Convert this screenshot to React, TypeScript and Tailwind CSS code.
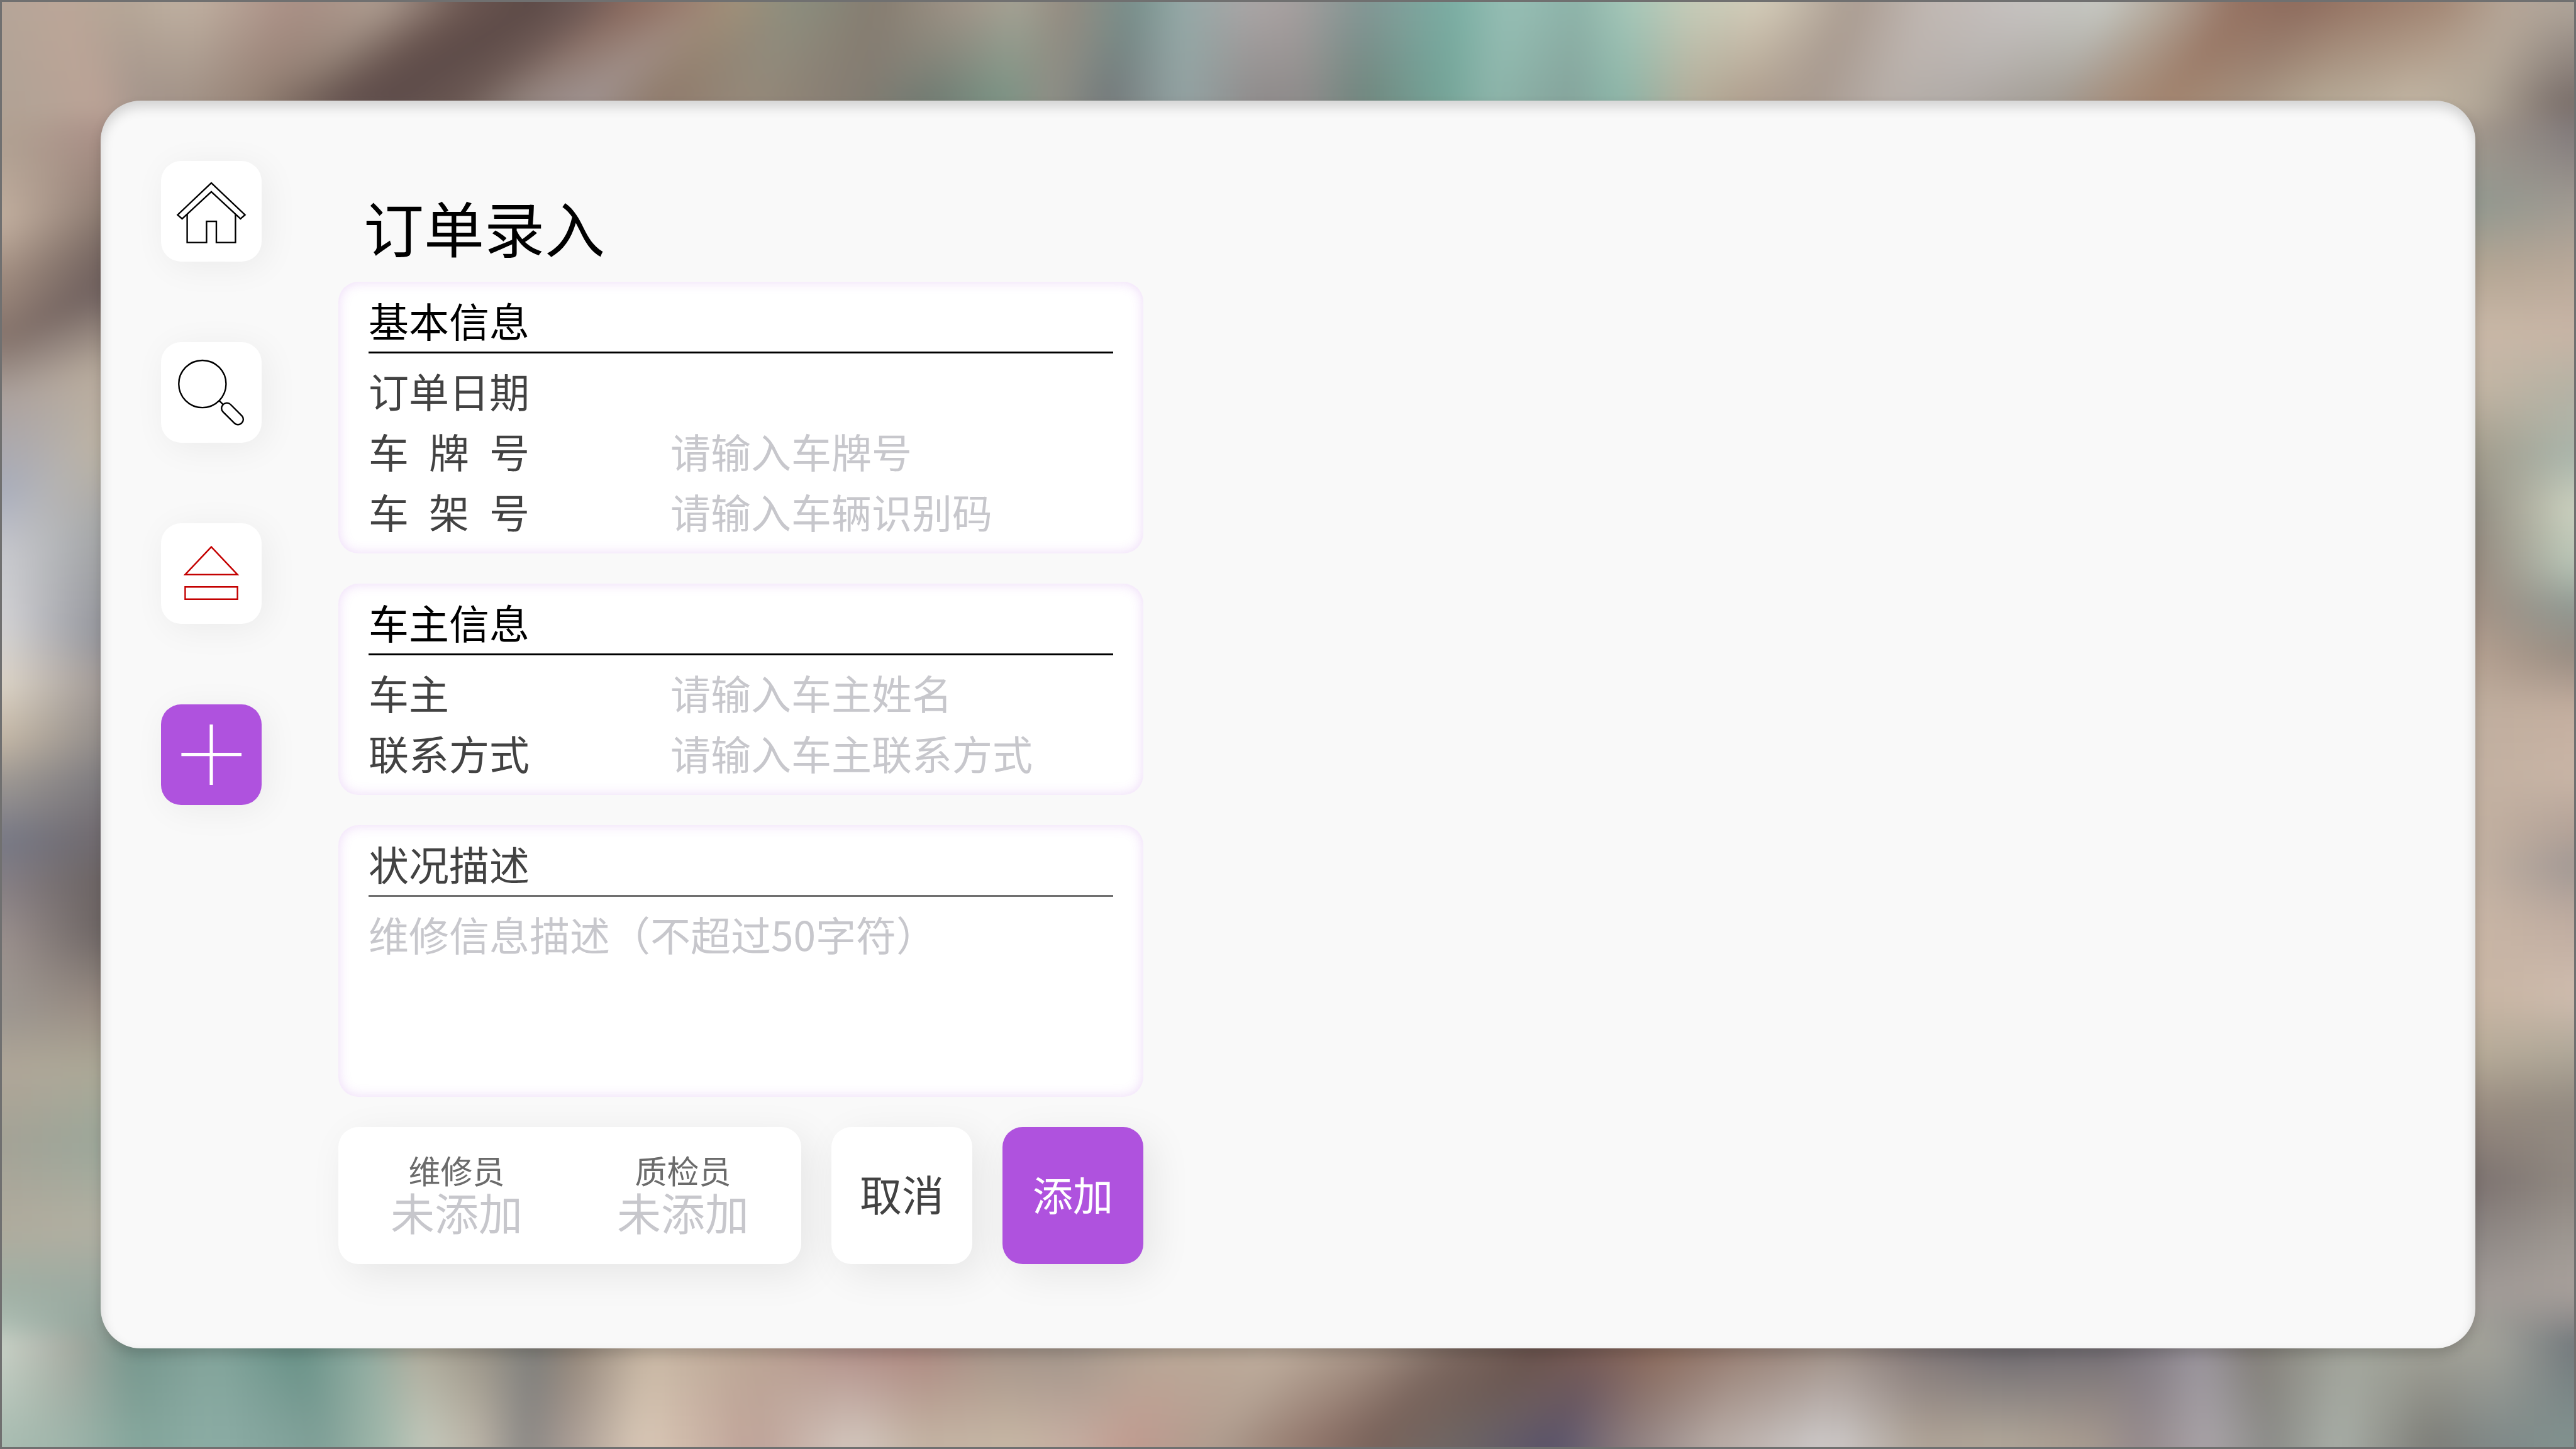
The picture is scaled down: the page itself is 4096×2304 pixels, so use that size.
import React from "react";

type Stop = [number, number, string, string];

const TOP: Stop[] = [
  [0, 0, "b5a598", "b0a295"], [35, 60, "bba698", "bba396"], [75, 85, "b6a797", "a5958c"],
  [115, 115, "c0b1a2", "a29287"], [180, 150, "a98e84", "978477"], [235, 175, "ad9c90", "7f6c62"],
  [290, 205, "6b5650", "665450"], [330, 232, "5d4a47", "5e4c4a"], [360, 275, "6e5955", "685651"],
  [388, 320, "8b6a5e", "948681"], [425, 355, "9c8070", "9f9290"], [450, 400, "a0907a", "8f7a6b"],
  [490, 455, "8a8d7e", "96897a"], [535, 520, "857c70", "847c72"], [590, 565, "a2978a", "6f7b72"],
  [620, 610, "a5a294", "7a9384"], [650, 640, "948b80", "8e8f86"], [690, 675, "78908c", "73797a"],
  [720, 720, "94a9a7", "93a3a3"], [760, 765, "aaa6a6", "8f8b8b"], [785, 795, "a8a0a0", "8d8b8a"],
  [830, 830, "839694", "70867e"], [885, 880, "7aaea3", "74a498"], [920, 910, "97bfb5", "8db5aa"],
  [960, 955, "8db3a9", "85a39b"], [990, 985, "a3c6b8", "8ab5a8"], [1030, 1030, "c5ccb9", "b3ad9a"],
  [1075, 1060, "d4ccb9", "b0a08f"], [1130, 1105, "aa9c91", "a89a90"], [1175, 1150, "c0b7b2", "b7afa9"],
  [1230, 1190, "c6c2c0", "b0aaa6"], [1285, 1250, "c6c8c2", "a39c94"], [1320, 1290, "b3a89b", "a58c7a"],
  [1365, 1320, "957262", "a2846f"], [1400, 1370, "8d6a5c", "a59280"], [1440, 1410, "987766", "b3a693"],
  [1490, 1470, "a38775", "c1b5a3"], [1530, 1510, "b5a597", "b3a898"], [1568, 1560, "b0a69b", "7a6f6b"],
];

const BOTTOM: Stop[] = [
  [0, 0, "c9d1c6", "a8bcb1"], [45, 40, "a4a89f", "9fb6ab"], [80, 85, "75958c", "84a69c"],
  [130, 130, "85a69d", "8cada5"], [180, 195, "669086", "7f9f97"], [220, 235, "8eaba0", "a3b9ac"],
  [255, 260, "b0ac9c", "c3c8bb"], [290, 290, "9c9689", "bdb5a8"], [325, 320, "7e7e7b", "8c8986"],
  [350, 345, "938679", "a69a93"], [395, 390, "c9b8a5", "dac9b7"], [450, 460, "bda897", "bea197"],
  [520, 520, "b08d86", "d4c9c0"], [560, 560, "ad8880", "c4b4a4"], [600, 620, "a69388", "c7b7a5"],
  [650, 655, "a2958a", "c6ada1"], [710, 685, "b8a897", "c19b90"], [780, 740, "beac9c", "ae9c8e"],
  [840, 790, "a49184", "93786d"], [890, 830, "7b6860", "7b645b"], [940, 880, "69514b", "6f6765"],
  [975, 945, "7d5e55", "58526b"], [1010, 990, "8d6b5c", "8b7c7e"], [1060, 1040, "987f73", "b6aaa4"],
  [1120, 1115, "9f8f86", "cfcccc"], [1170, 1170, "807576", "b0a497"], [1220, 1220, "6c686e", "b3a99b"],
  [1285, 1270, "726d74", "a99c90"], [1310, 1305, "827c84", "958a8c"], [1340, 1345, "9a949c", "a9a4a8"],
  [1375, 1385, "837e78", "8b8c88"], [1430, 1425, "a3a69c", "a9afa8"], [1480, 1480, "a0a096", "7c7c76"],
  [1520, 1520, "a3a29a", "7e8887"], [1568, 1568, "72797c", "829390"],
];

const LEFT: Stop[] = [
  [0, 0, "bcaa9b", "baa79a"], [56, 56, "b2a394", "bba498"], [90, 84, "b0a092", "a98f86"],
  [135, 125, "c3b0a0", "8f7d73"], [169, 155, "a18d80", "766661"], [208, 176, "85736b", "6e5f5d"],
  [242, 225, "aca19c", "b9ac9d"], [303, 270, "a9afbf", "bdb3a3"], [338, 320, "c8c9ce", "a5a7a8"],
  [377, 388, "d3d3d6", "93949b"], [416, 416, "ddd5c8", "a29a96"], [450, 450, "c5b8a6", "928d8a"],
  [475, 475, "a09a94", "7f7c80"], [512, 512, "777986", "6f696e"], [540, 540, "878085", "6b6362"],
  [574, 570, "9c918e", "6d6564"], [619, 615, "9d9891", "9a8d83"], [652, 652, "b0a698", "aca997"],
  [697, 697, "a3a296", "9ba79a"], [748, 748, "b0ab9d", "b2b0a2"], [787, 787, "a0b0a5", "9ba9a0"],
  [816, 816, "b4c4b9", "8da097"], [849, 849, "d1d8ce", "8fa39a"], [882, 882, "a5bdb1", "90aaa2"],
];

const RIGHT: Stop[] = [
  [0, 0, "a89686", "b0a8a0"], [28, 28, "b7a896", "8e817c"], [50, 50, "bcaf9e", "736663"],
  [79, 79, "a4988c", "80797a"], [124, 124, "90988f", "a09a92"], [163, 163, "b3a593", "b8a899"],
  [202, 202, "c9b8a7", "c8b5a6"], [236, 236, "c3b5a4", "b5b2a4"], [276, 276, "a29b8b", "a9b5ab"],
  [309, 309, "908b80", "cdd2c0"], [343, 343, "95887d", "b8c6b7"], [371, 371, "a39184", "8f9892"],
  [399, 399, "b5a090", "978b81"], [433, 433, "bfae9e", "c4ae9f"], [472, 472, "c2b0a1", "c9b5a6"],
  [506, 506, "c3b1a1", "b3a298"], [529, 529, "c4b2a2", "a19894"], [562, 562, "c8b5a5", "bfaca0"],
  [607, 607, "c8b5a3", "cfbcae"], [641, 641, "b8ac99", "b0a899"], [675, 675, "9a8d81", "938b81"],
  [720, 720, "7a706e", "8f8780"], [759, 759, "8f8986", "a09a94"], [787, 787, "a09a96", "a8a09b"],
  [821, 821, "a3a59b", "75787c"], [849, 849, "8f9790", "7c8487"], [882, 882, "7f8a86", "7f8886"],
];

const ROWS = 10;
const COLUMNS = 4;

function lerp(a: number, b: number, t: number) {
  return a + (b - a) * t;
}

function rgb(hex: string) {
  return [0, 2, 4].map((i) => parseInt(hex.slice(i, i + 2), 16));
}

/* A band of colour cells running along one side of the wallpaper. */
function Band({ stops, from, to, vertical }: { stops: Stop[]; from: number; to: number; vertical?: boolean }) {
  const first = stops[0];
  const last = stops[stops.length - 1];
  const all: Stop[] = [
    [first[0] - 40, first[1] - 40, first[2], first[3]],
    ...stops,
    [last[0] + 40, last[1] + 40, last[2], last[3]],
  ];
  const outerIsTo = from > 400;
  const cells: React.ReactElement[] = [];
  for (let i = 0; i < all.length - 1; i++) {
    const a = all[i];
    const b = all[i + 1];
    const corners = [rgb(a[2]), rgb(a[3]), rgb(b[2]), rgb(b[3])];
    for (let c = 0; c < COLUMNS; c++) {
      for (let r = 0; r < ROWS; r++) {
        const [u0, u1] = [c / COLUMNS, (c + 1) / COLUMNS];
        const [v0, v1] = [r / ROWS, (r + 1) / ROWS];
        const along = (u: number, v: number) => lerp(lerp(a[0], a[1], v), lerp(b[0], b[1], v), u);
        const d0 = r === 0 ? from - (outerIsTo ? 8 : 30) : lerp(from, to, v0);
        const d1 = r === ROWS - 1 ? to + (outerIsTo ? 30 : 8) : lerp(from, to, v1);
        const um = (u0 + u1) / 2;
        const vm = (v0 + v1) / 2;
        const [p, q, s, t] = corners;
        const color = `rgb(${[0, 1, 2]
          .map((k) => Math.round(lerp(lerp(p[k], q[k], vm), lerp(s[k], t[k], vm), um)))
          .join(",")})`;
        const pts = [[along(u0, v0), d0], [along(u1, v0), d0], [along(u1, v1), d1], [along(u0, v1), d1]];
        cells.push(
          <polygon
            key={`${i}-${c}-${r}`}
            points={pts.map(([x, d]) => (vertical ? `${d},${x}` : `${x},${d}`)).join(" ")}
            fill={color}
            stroke={color}
          />
        );
      }
    }
  }
  return <g>{cells}</g>;
}

function Wallpaper() {
  return (
    <svg
      aria-hidden="true"
      className="absolute inset-0 h-full w-full"
      viewBox="0 0 1568 882"
      preserveAspectRatio="none"
    >
      <defs>
        <filter
          id="soften"
          filterUnits="userSpaceOnUse"
          x="-40"
          y="-40"
          width="1648"
          height="962"
          colorInterpolationFilters="sRGB"
        >
          <feGaussianBlur stdDeviation="6" />
        </filter>
      </defs>
      <g filter="url(#soften)">
        <rect x="-40" y="-40" width="1648" height="962" fill="#a89c92" />
        <Band stops={LEFT} from={0} to={61} vertical />
        <Band stops={RIGHT} from={1507} to={1568} vertical />
        <Band stops={TOP} from={0} to={61} />
        <Band stops={BOTTOM} from={821} to={882} />
      </g>
    </svg>
  );
}

function HomeIcon() {
  return (
    <svg viewBox="0 0 200 200" className="h-full w-full" fill="none" stroke="#000" strokeWidth="3">
      <path d="M100 43.5 167 107 158 115 100 61 42 115 33 107Z" />
      <path d="M52 106V162H90.5V120H110V162H148V106" />
    </svg>
  );
}

function SearchIcon() {
  return (
    <svg viewBox="0 0 200 200" className="h-full w-full" fill="none" stroke="#000" strokeWidth="3">
      <circle cx="82.3" cy="83.2" r="47" />
      <path d="M115.5 116 124 124.5" />
      <rect x="-10.5" y="-10.5" width="52" height="21" rx="10" transform="translate(131 131.5) rotate(45)" />
    </svg>
  );
}

function EjectIcon() {
  return (
    <svg viewBox="0 0 200 200" className="h-full w-full" fill="none" stroke="#c40000" strokeWidth="3">
      <path d="M100 47 152 102H48Z" />
      <path d="M48 126.5H152V151H48Z" />
    </svg>
  );
}

function PlusIcon() {
  return (
    <svg viewBox="0 0 200 200" className="h-full w-full" fill="none" stroke="#fff" strokeWidth="6.5">
      <path d="M100 40V160M40.5 99.5H160" />
    </svg>
  );
}

function NavButton({ label, active, children }: { label: string; active?: boolean; children: React.ReactNode }) {
  return (
    <button
      type="button"
      aria-label={label}
      className={
        "size-40 rounded-[32px] shadow-[8px_8px_56px_rgba(0,0,0,0.06)] " + (active ? "bg-[#af52de]" : "bg-white")
      }
    >
      {children}
    </button>
  );
}

function Card({ children }: { children: React.ReactNode }) {
  return (
    <section className="rounded-[32px] bg-white px-12 py-4 shadow-[inset_0_0_19px_rgba(175,82,222,0.22)]">
      {children}
    </section>
  );
}

function CardTitle({ children }: { children: React.ReactNode }) {
  return (
    <h2 className="mb-[14px] h-[98px] border-b-[3px] border-black text-[64px] leading-[88px] text-black">{children}</h2>
  );
}

function Field({ id, label, placeholder, spread }: { id: string; label: string; placeholder?: string; spread?: boolean }) {
  return (
    <div className="flex h-24 items-start text-[64px] leading-[88px]">
      <div className="w-[480px] shrink-0">
        <label htmlFor={id} className={"block w-64 whitespace-nowrap " + (spread ? "[text-align-last:justify]" : "")}>
          {label}
        </label>
      </div>
      <input
        id={id}
        type="text"
        placeholder={placeholder}
        className="h-[88px] min-w-0 flex-1 bg-transparent outline-none placeholder:text-[#c7c7cc]"
      />
    </div>
  );
}

function Assignee({ role, value }: { role: string; value: string }) {
  return (
    <button type="button" className="flex flex-col items-center justify-center pb-2">
      <span className="text-[51px] leading-[60px] text-[#6b6b6b]">{role}</span>
      <span className="text-[70px] leading-[74px] text-[#c7c7cc]">{value}</span>
    </button>
  );
}

export default function App() {
  return (
    <div className="relative flex min-h-screen w-full border-[3px] border-[#707070] p-[157px] font-['Noto_Sans_CJK_SC',sans-serif] font-normal text-[#424242]">
      <Wallpaper />
      <main className="relative flex flex-1 items-start gap-[122px] rounded-[64px] bg-[#f9f9f9] p-24 shadow-[0_10px_19px_rgba(0,0,0,0.16),inset_0_10px_19px_rgba(0,0,0,0.16)]">
        <nav className="flex flex-col gap-32">
          <NavButton label="首页">
            <HomeIcon />
          </NavButton>
          <NavButton label="搜索">
            <SearchIcon />
          </NavButton>
          <NavButton label="出库">
            <EjectIcon />
          </NavButton>
          <NavButton label="新增" active>
            <PlusIcon />
          </NavButton>
        </nav>

        <form className="w-full max-w-[1280px]">
          <h1 className="pt-8 pb-4 pl-10 text-[96px] leading-[144px] text-black">订单录入</h1>
          <div className="flex flex-col gap-12">
            <Card>
              <CardTitle>基本信息</CardTitle>
              <Field id="date" label="订单日期" />
              <Field id="plate" label="车 牌 号" placeholder="请输入车牌号" spread />
              <Field id="vin" label="车 架 号" placeholder="请输入车辆识别码" spread />
            </Card>
            <Card>
              <CardTitle>车主信息</CardTitle>
              <Field id="owner" label="车主" placeholder="请输入车主姓名" />
              <Field id="contact" label="联系方式" placeholder="请输入车主联系方式" />
            </Card>
            <Card>
              <label
                htmlFor="description"
                className="mb-[14px] block h-[98px] border-b-[3px] border-[#707070] text-[64px] leading-[88px]"
              >
                状况描述
              </label>
              <textarea
                id="description"
                maxLength={50}
                placeholder="维修信息描述（不超过50字符）"
                className="block h-72 w-full resize-none bg-transparent text-[64px] leading-[88px] outline-none placeholder:text-[#c7c7cc]"
              />
            </Card>
            <div className="flex h-[218px] gap-12">
              <div className="grid flex-1 grid-cols-2 rounded-[32px] bg-white px-2 shadow-[16px_16px_64px_rgba(0,0,0,0.08)]">
                <Assignee role="维修员" value="未添加" />
                <Assignee role="质检员" value="未添加" />
              </div>
              <button
                type="button"
                className="w-56 rounded-[32px] bg-white pb-2 text-[67px] shadow-[16px_16px_64px_rgba(0,0,0,0.08)]"
              >
                取消
              </button>
              <button
                type="submit"
                className="w-56 rounded-[32px] bg-[#af52de] pb-2 text-[64px] text-white shadow-[16px_16px_64px_rgba(0,0,0,0.08)]"
              >
                添加
              </button>
            </div>
          </div>
        </form>
      </main>
    </div>
  );
}
